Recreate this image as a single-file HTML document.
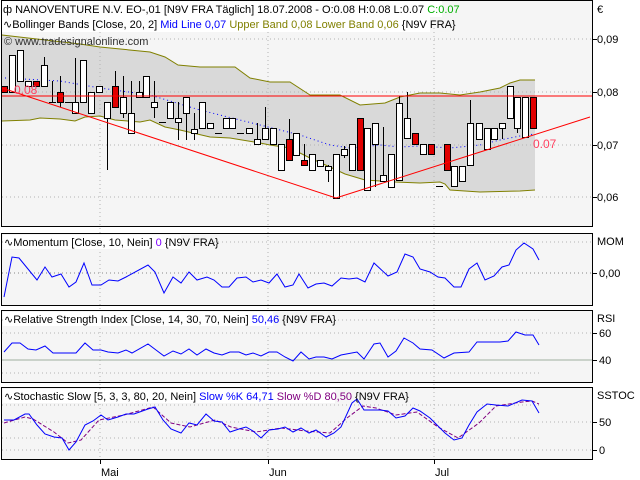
<!DOCTYPE html>
<html><head><meta charset="utf-8"><style>
html,body{margin:0;padding:0;background:#fff;}
svg{display:block;font-family:"Liberation Sans",sans-serif;font-size:11px;}
</style></head><body>
<svg width="640" height="480" viewBox="0 0 640 480" xmlns="http://www.w3.org/2000/svg">
<rect width="640" height="480" fill="#fff"/>
<!-- panels bg -->
<rect x="1" y="0" width="592" height="227" fill="#f5f5f5"/>
<rect x="1" y="233" width="592" height="73" fill="#f5f5f5"/>
<rect x="1" y="310" width="592" height="73" fill="#f5f5f5"/>
<rect x="1" y="387" width="592" height="73" fill="#f5f5f5"/>
<!-- band fill -->
<polygon fill="#d9d9d9" points="2,35 80,44 100,47 150,52 165,57 178,65 200,67 235,67 250,78 270,82 290,82 310,95 340,95 360,105 385,103 400,97 420,93 440,93 460,95 480,92 500,88 510,83 520,80 535,80 535,190 520,191 480,192 450,190 445,184 440,182 420,183 395,182 365,180 345,174 330,167 310,158 290,148 270,145 260,143 230,138 210,137 180,130 165,127 150,120 140,122 115,120 100,116 85,117 75,121 60,119 40,118 30,120 2,121"/>
<!-- grid -->
<g stroke="#b4b4b4" stroke-dasharray="1,3" fill="none">
<line x1="2" y1="39" x2="593" y2="39"/><line x1="2" y1="92" x2="593" y2="92"/><line x1="2" y1="145" x2="593" y2="145"/><line x1="2" y1="197" x2="593" y2="197"/>
<line x1="2" y1="242" x2="593" y2="242"/><line x1="2" y1="273" x2="593" y2="273" stroke="#888"/>
<line x1="2" y1="320" x2="540" y2="320"/><line x1="2" y1="333" x2="593" y2="333"/><line x1="2" y1="373" x2="540" y2="373"/>
<line x1="2" y1="405" x2="540" y2="405"/><line x1="2" y1="422" x2="593" y2="422"/><line x1="2" y1="438" x2="540" y2="438"/><line x1="2" y1="450" x2="593" y2="450"/>
<line x1="100" y1="0" x2="100" y2="460"/><line x1="268" y1="0" x2="268" y2="460"/><line x1="434" y1="0" x2="434" y2="460"/>
</g>
<line x1="2" y1="360" x2="593" y2="360" stroke="#a0b0a0"/>
<!-- band lines -->
<polyline fill="none" stroke="#808000" points="2,35 80,44 100,47 150,52 165,57 178,65 200,67 235,67 250,78 270,82 290,82 310,95 340,95 360,105 385,103 400,97 420,93 440,93 460,95 480,92 500,88 510,83 520,80 535,80"/>
<polyline fill="none" stroke="#808000" points="2,121 30,120 40,118 60,119 75,121 85,117 100,116 115,120 140,122 150,120 165,127 180,130 210,137 230,138 260,143 270,145 290,148 310,158 330,167 345,174 365,180 395,182 420,183 440,182 445,184 450,190 480,192 520,191 535,190"/>
<polyline fill="none" stroke="#0000ff" stroke-dasharray="1,3" points="5,78 60,81 100,88 150,95 200,110 260,125 300,135 330,145 350,148 380,145 400,147 420,146 450,148 480,145 500,140 520,136 535,134"/>
<!-- candles -->
<g stroke="#000" stroke-width="1">
<line x1="44.5" y1="57" x2="44.5" y2="86"/><line x1="52.5" y1="81" x2="52.5" y2="102"/><line x1="60.5" y1="76" x2="60.5" y2="107"/><line x1="75.5" y1="58" x2="75.5" y2="113"/><line x1="107.5" y1="102" x2="107.5" y2="170"/><line x1="115.5" y1="71" x2="115.5" y2="107"/><line x1="123.5" y1="76" x2="123.5" y2="118"/><line x1="131.5" y1="81" x2="131.5" y2="133"/><line x1="139.5" y1="81" x2="139.5" y2="97"/><line x1="154.5" y1="81" x2="154.5" y2="118"/><line x1="178.5" y1="102" x2="178.5" y2="140"/><line x1="186.5" y1="97" x2="186.5" y2="140"/><line x1="194.5" y1="113" x2="194.5" y2="140"/><line x1="257.5" y1="123" x2="257.5" y2="143"/><line x1="265.5" y1="107" x2="265.5" y2="139"/><line x1="289.5" y1="119" x2="289.5" y2="160"/><line x1="304.5" y1="144" x2="304.5" y2="165"/><line x1="328.5" y1="165" x2="328.5" y2="182"/><line x1="344.5" y1="146" x2="344.5" y2="158"/><line x1="375.5" y1="123" x2="375.5" y2="187"/><line x1="383.5" y1="127" x2="383.5" y2="181"/><line x1="399.5" y1="96" x2="399.5" y2="180"/><line x1="407.5" y1="92" x2="407.5" y2="138"/><line x1="470.5" y1="100" x2="470.5" y2="165"/><line x1="487.5" y1="128" x2="487.5" y2="149"/><line x1="502.5" y1="123" x2="502.5" y2="139"/><line x1="517.5" y1="97" x2="517.5" y2="133"/>
<line x1="49" y1="102.5" x2="56" y2="102.5"/><line x1="65" y1="102.5" x2="72" y2="102.5"/><line x1="159" y1="122.5" x2="166" y2="122.5"/><line x1="215" y1="133.5" x2="222" y2="133.5"/><line x1="237" y1="133.5" x2="244" y2="133.5"/><line x1="436" y1="186.5" x2="443" y2="186.5"/>
</g>
<g stroke="#000" fill="#fff">
<rect x="9.5" y="55.5" width="6" height="37"/><rect x="17.5" y="50.5" width="6" height="31"/><rect x="25.5" y="81.5" width="6" height="5"/><rect x="41.5" y="65.5" width="6" height="21"/><rect x="72.5" y="102.5" width="6" height="11"/><rect x="80.5" y="60.5" width="6" height="42"/><rect x="88.5" y="92.5" width="6" height="21"/><rect x="96.5" y="86.5" width="6" height="6"/><rect x="104.5" y="102.5" width="6" height="16"/><rect x="120.5" y="97.5" width="6" height="16"/><rect x="128.5" y="113.5" width="6" height="20"/><rect x="136.5" y="92.5" width="6" height="5"/><rect x="143.5" y="76.5" width="6" height="21"/><rect x="151.5" y="102.5" width="6" height="5"/><rect x="167.5" y="102.5" width="6" height="16"/><rect x="175.5" y="118.5" width="6" height="4"/><rect x="183.5" y="97.5" width="6" height="16"/><rect x="191.5" y="129.5" width="6" height="4"/><rect x="199.5" y="102.5" width="6" height="26"/><rect x="207.5" y="123.5" width="6" height="5"/><rect x="223.5" y="118.5" width="6" height="10"/><rect x="229.5" y="118.5" width="6" height="10"/><rect x="246.5" y="128.5" width="6" height="5"/><rect x="254.5" y="139.5" width="6" height="5"/><rect x="262.5" y="128.5" width="6" height="11"/><rect x="270.5" y="128.5" width="6" height="16"/><rect x="278.5" y="144.5" width="6" height="26"/><rect x="293.5" y="133.5" width="6" height="22"/><rect x="309.5" y="154.5" width="6" height="16"/><rect x="317.5" y="160.5" width="6" height="6"/><rect x="325.5" y="166.5" width="6" height="4"/><rect x="333.5" y="154.5" width="6" height="44"/><rect x="341.5" y="149.5" width="6" height="6"/><rect x="349.5" y="144.5" width="6" height="26"/><rect x="364.5" y="128.5" width="6" height="62"/><rect x="372.5" y="123.5" width="6" height="21"/><rect x="380.5" y="175.5" width="6" height="6"/><rect x="388.5" y="154.5" width="6" height="33"/><rect x="396.5" y="103.5" width="6" height="77"/><rect x="404.5" y="118.5" width="6" height="20"/><rect x="420.5" y="144.5" width="6" height="10"/><rect x="451.5" y="166.5" width="6" height="20"/><rect x="459.5" y="166.5" width="6" height="15"/><rect x="467.5" y="123.5" width="6" height="42"/><rect x="476.5" y="123.5" width="6" height="16"/><rect x="484.5" y="128.5" width="6" height="21"/><rect x="491.5" y="128.5" width="6" height="11"/><rect x="499.5" y="123.5" width="6" height="5"/><rect x="507.5" y="86.5" width="6" height="32"/><rect x="514.5" y="97.5" width="6" height="31"/><rect x="522.5" y="97.5" width="6" height="40"/>
</g>
<g stroke="#000" fill="#e00000">
<rect x="1.5" y="86.5" width="6" height="6"/><rect x="33.5" y="81.5" width="6" height="5"/><rect x="57.5" y="92.5" width="6" height="10"/><rect x="112.5" y="86.5" width="6" height="21"/><rect x="286.5" y="139.5" width="6" height="21"/><rect x="301.5" y="160.5" width="6" height="5"/><rect x="357.5" y="118.5" width="6" height="52"/><rect x="412.5" y="133.5" width="6" height="11"/><rect x="428.5" y="144.5" width="6" height="10"/><rect x="444.5" y="144.5" width="6" height="26"/><rect x="530.5" y="97.5" width="6" height="31"/>
</g>
<!-- red lines -->
<line x1="2" y1="96" x2="593" y2="96" stroke="#ff0000"/>
<polyline fill="none" stroke="#ff0000" points="2,88 336,198 590,117"/>
<text x="14" y="94" fill="#ff4060" font-size="12">0.08</text>
<text x="533" y="148" fill="#ff4060" font-size="12">0.07</text>
<!-- indicator lines -->
<polyline fill="none" stroke="#0000ff" points="4,297 12,257 19,258 37,280 45,267 52,277 61,274 69,287 76,282 84,263 92,285 101,285 109,280 118,281 126,277 148,265 155,272 164,293 173,277 181,283 189,272 197,280 207,277 214,280 222,287 229,287 237,278 246,277 253,282 261,280 269,283 277,274 285,287 293,285 299,274 308,288 316,284 324,283 332,286 341,278 349,279 357,278 365,282 374,263 388,276 397,272 405,254 413,257 420,269 430,272 438,277 445,278 454,287 461,287 469,269 477,263 485,280 494,276 502,267 509,265 516,250 524,243 533,249 539,260"/>
<polyline fill="none" stroke="#0000ff" points="4,352 12,343 20,343 28,349 36,350 45,346 53,353 76,353 85,343 93,350 101,350 108,352 118,353 126,350 132,353 148,344 156,350 164,356 173,351 181,354 189,349 197,355 206,349 214,353 222,355 230,352 239,352 246,355 253,353 261,356 269,352 277,352 285,357 293,361 301,352 309,359 316,357 324,357 332,359 341,355 357,352 364,359 374,344 380,343 388,357 396,351 404,338 413,343 420,349 432,350 444,358 454,353 469,352 477,342 500,342 508,341 516,332 525,335 533,335 539,345"/>
<polyline fill="none" stroke="#800080" stroke-dasharray="4,2" points="4,423 25,417 33,419 54,432 68,443 81,440 99,420 124,415 153,407 171,423 190,427 215,420 231,427 256,432 281,428 306,431 330,433 347,418 363,406 376,408 396,415 417,412 438,427 458,438 479,423 496,406 522,402 532,401 539,404"/>
<polyline fill="none" stroke="#0000ff" points="4,420 14,420 25,414 29,414 37,425 45,434 54,437 62,438 69,450 76,442 85,425 93,421 101,415 108,420 118,417 126,414 134,414 148,409 155,407 163,420 171,429 181,433 189,423 197,425 206,414 214,421 222,422 230,432 239,429 246,427 253,431 261,438 269,430 278,429 285,427 293,432 301,428 309,433 316,430 326,437 334,433 341,427 352,403 357,399 364,410 380,410 388,411 396,418 405,416 413,408 420,411 430,418 445,433 454,440 462,438 469,425 477,412 487,404 496,405 508,406 522,400 532,401 539,413"/>
<!-- borders -->
<g fill="none" stroke="#000">
<rect x="1.5" y="0.5" width="591" height="226"/>
<rect x="1.5" y="233.5" width="591" height="72"/>
<rect x="1.5" y="310.5" width="591" height="72"/>
<rect x="1.5" y="387.5" width="591" height="72"/>
<line x1="100.5" y1="460" x2="100.5" y2="464"/><line x1="268.5" y1="460" x2="268.5" y2="464"/><line x1="434.5" y1="460" x2="434.5" y2="464"/>
<line x1="593" y1="39.5" x2="597" y2="39.5"/><line x1="593" y1="92.5" x2="597" y2="92.5"/><line x1="593" y1="145.5" x2="597" y2="145.5"/><line x1="593" y1="197.5" x2="597" y2="197.5"/>
<line x1="593" y1="273.5" x2="597" y2="273.5"/><line x1="593" y1="333.5" x2="597" y2="333.5"/><line x1="593" y1="360.5" x2="597" y2="360.5"/><line x1="593" y1="422.5" x2="597" y2="422.5"/><line x1="593" y1="450.5" x2="597" y2="450.5"/>
</g>
<!-- headers -->
<rect x="2" y="1" width="440" height="16" fill="#fff"/>
<rect x="2" y="17" width="428" height="15" fill="#fff"/>
<g font-size="11">
<text x="3" y="13"><tspan fill="#000">ф NANOVENTURE N.V.   EO-,01 [N9V FRA  Täglich]  18.07.2008 - O:0.08 H:0.08 L:0.07 </tspan><tspan fill="#00b000">C:0.07</tspan></text>
<text x="3" y="28"><tspan fill="#000">∿Bollinger Bands [Close, 20, 2] </tspan><tspan fill="#0000ff">Mid Line 0,07 </tspan><tspan fill="#808000">Upper Band 0,08 Lower Band 0,06 </tspan><tspan fill="#000">{N9V FRA}</tspan></text>
<text x="4" y="45" fill="#303030">© www.tradesignalonline.com</text>
<rect x="3" y="235" width="178" height="14" fill="#fff"/>
<text x="4" y="246"><tspan>∿Momentum [Close, 10, Nein] </tspan><tspan fill="#8000ff">0 </tspan><tspan>{N9V FRA}</tspan></text>
<rect x="3" y="312" width="270" height="14" fill="#fff"/>
<text x="4" y="323"><tspan>∿Relative Strength Index [Close, 14, 30, 70, Nein] </tspan><tspan fill="#0000ff">50,46 </tspan><tspan>{N9V FRA}</tspan></text>
<rect x="3" y="389" width="332" height="14" fill="#fff"/>
<text x="4" y="400"><tspan>∿Stochastic Slow [5, 3, 3, 80, 20, Nein] </tspan><tspan fill="#0000ff">Slow %K 64,71 </tspan><tspan fill="#800080">Slow %D 80,50 </tspan><tspan>{N9V FRA}</tspan></text>
<text x="597" y="13">€</text>
<text x="597" y="43">0,09</text><text x="597" y="96">0,08</text><text x="597" y="149">0,07</text><text x="597" y="201">0,06</text>
<text x="597" y="245">MOM</text><text x="599" y="277">0,00</text>
<text x="597" y="322">RSI</text><text x="599" y="337">60</text><text x="599" y="364">40</text>
<text x="597" y="399">SSTOC</text><text x="599" y="426">50</text><text x="599" y="454">0</text>
<text x="101" y="476">Mai</text><text x="269" y="476">Jun</text><text x="435" y="476">Jul</text>
</g>
</svg>
</body></html>
